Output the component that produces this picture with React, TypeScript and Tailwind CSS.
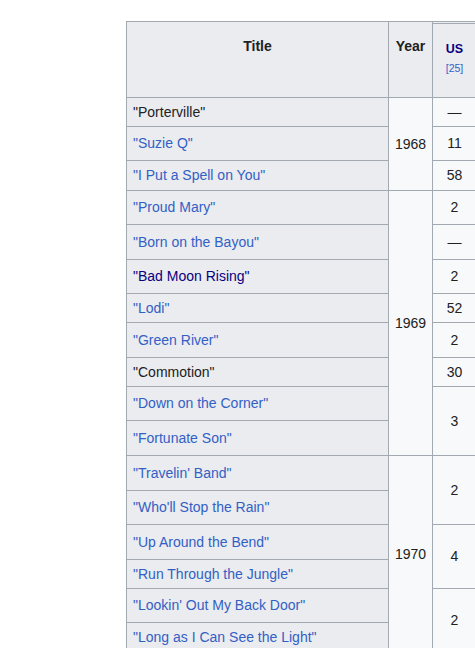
import { Fragment } from "react";

const tone = {
  plain: "text-[#202122]",
  link: "text-[#3360c4]",
  visited: "text-[#0b0080]",
};

type Song = {
  title: string;
  kind: keyof typeof tone;
  year?: { label: string; span: string };
  us?: { label: string; span: string };
};

const songs: Song[] = [
  { title: "Porterville", kind: "plain", year: { label: "1968", span: "row-span-3" }, us: { label: "—", span: "" } },
  { title: "Suzie Q", kind: "link", us: { label: "11", span: "" } },
  { title: "I Put a Spell on You", kind: "link", us: { label: "58", span: "" } },
  { title: "Proud Mary", kind: "link", year: { label: "1969", span: "row-span-8" }, us: { label: "2", span: "" } },
  { title: "Born on the Bayou", kind: "link", us: { label: "—", span: "" } },
  { title: "Bad Moon Rising", kind: "visited", us: { label: "2", span: "" } },
  { title: "Lodi", kind: "link", us: { label: "52", span: "" } },
  { title: "Green River", kind: "link", us: { label: "2", span: "" } },
  { title: "Commotion", kind: "plain", us: { label: "30", span: "" } },
  { title: "Down on the Corner", kind: "link", us: { label: "3", span: "row-span-2" } },
  { title: "Fortunate Son", kind: "link" },
  { title: "Travelin' Band", kind: "link", year: { label: "1970", span: "row-span-6" }, us: { label: "2", span: "row-span-2" } },
  { title: "Who'll Stop the Rain", kind: "link" },
  { title: "Up Around the Bend", kind: "link", us: { label: "4", span: "row-span-2" } },
  { title: "Run Through the Jungle", kind: "link" },
  { title: "Lookin' Out My Back Door", kind: "link", us: { label: "2", span: "row-span-2" } },
  { title: "Long as I Can See the Light", kind: "link" },
];

export default function App() {
  return (
    <div className="w-[475px] h-[648px] overflow-hidden bg-white pl-[126px] pt-[21px] font-['Liberation_Sans',Arial,sans-serif] text-[14px] text-[#202122]">
      <div className="grid w-[351px] grid-cols-[261px_43px_43px] grid-rows-[1px_73px_28px_33px_29px_33px_34px_33px_28px_34px_28px_33px_34px_34px_33px_34px_28px_33px_29px] gap-px bg-[#a2a9b1] p-px">
        {/* header */}
        <div className="row-span-2 bg-[#eaecf0] pt-[14px] text-center font-bold leading-[20px]">Title</div>
        <div className="row-span-2 bg-[#eaecf0] pt-[14px] text-center font-bold leading-[20px]">Year</div>
        <div className="bg-[#eaecf0]" />
        <div className="flex flex-col items-center justify-center bg-[#eaecf0] pb-[3px]">
          <span className="text-[12.5px] font-bold leading-[19px] text-[#0b0080]">US</span>
          <span className="text-[10.5px] leading-[19px] text-[#3360c4]">[25]</span>
        </div>

        {songs.map((s) => (
          <Fragment key={s.title}>
            <div className={`col-start-1 flex items-center bg-[#eaecf0] pl-[6px] ${tone[s.kind]}`}>
              "{s.title}"
            </div>
            {s.year && (
              <div className={`${s.year.span} flex items-center justify-center bg-[#f8f9fa]`}>{s.year.label}</div>
            )}
            {s.us && (
              <div className={`${s.us.span} col-start-3 flex items-center justify-center bg-[#f8f9fa]`}>{s.us.label}</div>
            )}
          </Fragment>
        ))}
      </div>
    </div>
  );
}
